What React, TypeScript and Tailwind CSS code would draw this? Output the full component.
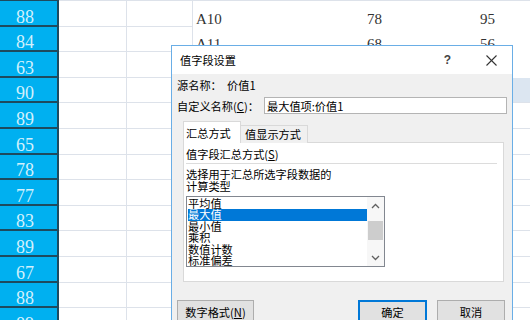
import React from "react";

const leftVals = ["88", "84", "63", "90", "89", "65", "78", "77", "83", "89", "67", "88", "89"];

const topRows: Record<number, [string, string, string]> = {
  0: ["A10", "78", "95"],
  1: ["A11", "68", "56"],
};

const listItems = ["平均值", "最大值", "最小值", "乘积", "数值计数", "标准偏差"];

function Chevron({ up }: { up?: boolean }) {
  return (
    <svg width="9" height="6" viewBox="0 0 9 6">
      <polyline
        points={up ? "1,5 4.5,1.5 8,5" : "1,1 4.5,4.5 8,1"}
        fill="none"
        stroke="#606060"
        strokeWidth="1.3"
      />
    </svg>
  );
}

export default function App() {
  return (
    <div className="relative w-[530px] h-[320px] overflow-hidden bg-white">
      {/* spreadsheet */}
      <div className="flex flex-col">
        <div className="flex h-px shrink-0">
          <div className="w-[59px] bg-[#1e4a5e]" />
          <div className="flex-1 bg-[#dde2ea]" />
        </div>
        {leftVals.map((v, i) => (
          <div key={i} className="flex h-[25.6px] shrink-0">
            <div className="w-[57px] bg-[#00b0f0] border-b-2 border-[#1e4a5e] flex items-end justify-center pr-[7px] font-['Liberation_Serif',serif] text-[18px] leading-[16px] text-[#d2f0fc]">
              {v}
            </div>
            <div className="w-[2px] bg-[#1e4a5e]" />
            <div className="w-[68px] border-b border-r border-[#dde2ea]" />
            <div className="w-[66px] border-b border-r border-[#dde2ea]" />
            <div
              className={`flex-1 flex items-end font-['Liberation_Serif',serif] text-[15px] leading-[14px] text-[#333333] ${
                i >= 3 ? "border-b border-[#dde2ea]" : ""
              } ${i === 3 ? "bg-[#dce6f1]" : ""}`}
            >
              {topRows[i] && (
                <>
                  <div className="w-[174px] pl-[3px] pb-[1px]">{topRows[i][0]}</div>
                  <div className="w-[113px] pb-[1px]">{topRows[i][1]}</div>
                  <div className="pb-[1px]">{topRows[i][2]}</div>
                </>
              )}
            </div>
          </div>
        ))}
      </div>

      {/* dialog */}
      <div className="absolute left-[171px] top-[45px] w-[342px] h-[300px] border border-[#6aaee6] bg-[#f0f0f0] font-['Noto_Sans_CJK_SC',sans-serif] text-[11.2px] text-black">
        <div className="h-[28px] bg-white flex items-center pl-[8px] pr-[15px]">
          <span className="leading-[14px]">值字段设置</span>
          <span className="ml-auto mr-[35px] font-['Liberation_Sans',sans-serif] text-[12px] font-bold text-[#444]">?</span>
          <svg width="11" height="11" viewBox="0 0 11 11">
            <line x1="0.5" y1="0.5" x2="10.5" y2="10.5" stroke="#333" strokeWidth="1.1" />
            <line x1="10.5" y1="0.5" x2="0.5" y2="10.5" stroke="#333" strokeWidth="1.1" />
          </svg>
        </div>

        <div className="px-[5px] pt-[4px]">
          <div className="flex h-[14px] items-center leading-[14px]">
            <span className="w-[50px]">源名称：</span>
            <span>价值1</span>
          </div>

          <div className="mt-[5px] flex h-[17px] items-center leading-[14px]">
            <span className="w-[87px]">
              自定义名称(<span className="underline">C</span>)：
            </span>
            <div className="flex-1 h-[17px] border border-[#b4b4b4] bg-white flex items-center pl-[2px] leading-[14px]">
              最大值项:价值1
            </div>
          </div>

          <div className="mt-[7px] ml-[6px] flex items-end -mb-px relative z-10 leading-[14px]">
            <div className="w-[58px] h-[22px] border border-b-0 border-[#d9d9d9] bg-white pl-[2px] pt-[4px]">
              汇总方式
            </div>
            <div className="w-[67px] h-[18px] border border-l-0 border-b-0 border-[#d9d9d9] bg-[#f0f0f0] pl-[4px] pt-[1px]">
              值显示方式
            </div>
          </div>

          <div className="ml-[6px] w-[321px] h-[140px] border border-[#d9d9d9] bg-white px-[2px] pt-[4px] leading-[14px]">
            <div className="h-[14px]">
              值字段汇总方式(<span className="underline">S</span>)
            </div>
            <div className="mt-[2px] mr-[4px] h-px bg-[#dcdcdc]" />
            <div className="mt-[4px] leading-[12px]">
              <div>选择用于汇总所选字段数据的</div>
              <div>计算类型</div>
            </div>
            <div className="mt-[4px] w-[199px] h-[71px] border border-[#828790] bg-white flex">
              <div className="flex-1 pl-px pt-px overflow-hidden">
                {listItems.map((it, i) => (
                  <div
                    key={it}
                    className={`h-[11.4px] leading-[11.4px] ${
                      i === 1 ? "bg-[#0078d7] text-white" : ""
                    }`}
                  >
                    {it}
                  </div>
                ))}
              </div>
              <div className="w-[17px] bg-[#f7f7f7] flex flex-col items-center">
                <div className="h-[17px] flex items-center justify-center">
                  <Chevron up />
                </div>
                <div className="flex-1 w-full px-px">
                  <div className="mt-[7px] h-[19px] bg-[#cdcdcd]" />
                </div>
                <div className="h-[17px] flex items-center justify-center">
                  <Chevron />
                </div>
              </div>
            </div>
          </div>

          <div className="mt-[18px] flex pr-[2px] leading-[14px]">
            <div className="w-[77px] h-[23px] border border-[#adadad] bg-[#e1e1e1] flex items-center justify-center">
              数字格式(<span className="underline">N</span>)
            </div>
            <div className="ml-auto w-[69px] h-[23px] border-2 border-[#0078d7] bg-[#e1e1e1] flex items-center justify-center">
              确定
            </div>
            <div className="ml-[10px] w-[68px] h-[23px] border border-[#adadad] bg-[#e1e1e1] flex items-center justify-center">
              取消
            </div>
          </div>
        </div>
      </div>
    </div>
  );
}
